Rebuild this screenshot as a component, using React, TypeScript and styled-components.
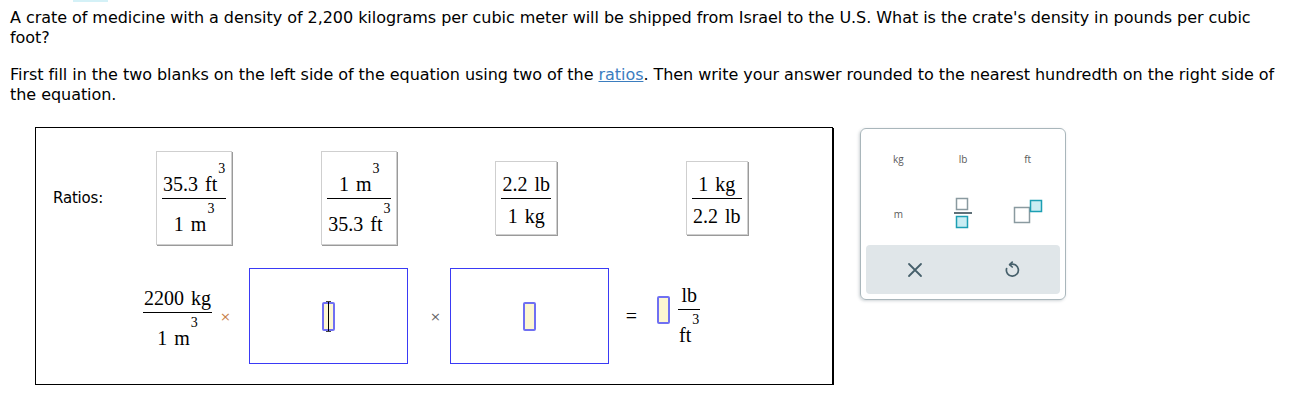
import styled, { createGlobalStyle } from "styled-components";

const Global = createGlobalStyle`
  body {
    margin: 0;
    background: #fff;
    font-family: "DejaVu Sans", Verdana, sans-serif;
    color: #000;
  }
`;

const Page = styled.div`
  padding: 0 11px 0 10px;
`;

const Tab = styled.div`
  width: 35px;
  height: 2px;
  margin-left: 63px;
  background: #d4f1f7;
`;

const Para = styled.p<{ $top: number }>`
  margin: ${(p) => p.$top}px 0 0;
  font-size: 16px;
  line-height: 20px;
  letter-spacing: -0.05px;
`;

const Link = styled.a`
  color: #3b7dbf;
  text-decoration: underline;
`;

const Workspace = styled.div`
  display: flex;
  align-items: flex-start;
  margin: 22px 0 0 25px;
  gap: 27px;
`;

const Board = styled.div`
  width: 798px;
  height: 258px;
  box-sizing: border-box;
  border: 1px solid #000;
  box-shadow: 1px 1px 0 #000;
  padding-top: 24px;
  display: flex;
  flex-direction: column;
`;

const RatioRow = styled.div`
  display: flex;
  align-items: center;
  height: 92px;
  padding-left: 17px;
`;

const Label = styled.span`
  width: 103px;
  font-size: 15px;
  letter-spacing: -0.2px;
`;

const Card = styled.div<{ $ml: number }>`
  margin-left: ${(p) => p.$ml}px;
  padding: 0 5px;
  border: 1px solid #cfcfcf;
  box-shadow: 1px 1px 0 #9a9a9a;
  display: flex;
  align-items: center;
`;

const Frac = styled.span<{ $pad?: number; $lift?: number; $ml?: number }>`
  display: inline-flex;
  flex-direction: column;
  align-items: center;
  padding: ${(p) => p.$pad ?? 0}px 0;
  margin-left: ${(p) => p.$ml ?? 0}px;
  margin-bottom: ${(p) => p.$lift ?? 0}px;
  font-family: "Liberation Serif", "Times New Roman", serif;
  font-size: 20px;
`;

const Part = styled.span<{ $h: number }>`
  display: flex;
  align-items: flex-end;
  justify-content: center;
  height: ${(p) => p.$h}px;
  padding: 0 1px;
  line-height: 20px;
  white-space: nowrap;
`;

const Bar = styled.span`
  align-self: stretch;
  height: 1px;
  background: #000;
  margin: 4px 0 3px;
`;

const Unit = styled.span`
  margin-left: 7px;
`;

const Sup = styled.span`
  font-size: 14px;
  align-self: flex-start;
  margin-left: 1px;
  line-height: 14px;
`;

const EqRow = styled.div`
  display: flex;
  align-items: center;
  height: 96px;
  margin-top: 24px;
  padding-left: 107px;
`;

const Times = styled.span<{ $ml: number; $color: string }>`
  margin-left: ${(p) => p.$ml}px;
  color: ${(p) => p.$color};
  font-size: 13px;
  font-family: "DejaVu Sans", sans-serif;
`;

const Slot = styled.div<{ $ml: number }>`
  margin-left: ${(p) => p.$ml}px;
  width: 159px;
  height: 96px;
  box-sizing: border-box;
  border: 1.5px solid #3a3af5;
  display: flex;
  align-items: center;
  justify-content: center;
`;

const Blank = styled.span<{ $ml?: number; $h?: number; $lift?: number }>`
  position: relative;
  display: inline-block;
  margin-left: ${(p) => p.$ml ?? 0}px;
  margin-bottom: ${(p) => p.$lift ?? 0}px;
  width: 13px;
  height: ${(p) => p.$h ?? 29}px;
  box-sizing: border-box;
  border: 2px solid #7070f2;
  border-radius: 2px;
  background: #fdf7d2;
`;

const Caret = styled.span`
  position: absolute;
  left: 4px;
  top: -3px;
  bottom: -3px;
  width: 1px;
  background: #000;
  &::before,
  &::after {
    content: "";
    position: absolute;
    left: -2px;
    width: 5px;
    height: 1px;
    background: #444;
  }
  &::before {
    top: 0;
  }
  &::after {
    bottom: 0;
  }
`;

const Equals = styled.span`
  margin-left: 17px;
  font-family: "Liberation Serif", serif;
  font-size: 20px;
`;

const Pad = styled.div`
  width: 206px;
  height: 172px;
  margin-top: 1px;
  box-sizing: border-box;
  border: 1px solid #a9b6bb;
  border-radius: 6px;
  box-shadow: -1px 1px 3px rgba(60, 80, 90, 0.25);
  padding: 2px 5px 5px;
  display: flex;
  flex-direction: column;
`;

const Keys = styled.div`
  display: grid;
  grid-template-columns: repeat(3, 1fr);
  grid-auto-rows: 55px;
`;

const Key = styled.div`
  display: flex;
  align-items: center;
  justify-content: center;
  font-family: "Open Sans", "DejaVu Sans", sans-serif;
  font-size: 10px;
  color: #5a5a5a;
`;

const Actions = styled.div`
  margin-top: auto;
  height: 49px;
  border-radius: 4px;
  background: #e0e6e9;
  display: grid;
  grid-template-columns: 1fr 1fr;
`;

const Action = styled.div`
  display: flex;
  align-items: center;
  justify-content: center;
`;

const FracIcon = () => (
  <svg width="20" height="34" viewBox="0 0 20 34">
    <rect x="3.5" y="1.5" width="11" height="11" fill="#fff" stroke="#8a9aa0" strokeWidth="1.5" />
    <rect x="1" y="15" width="18" height="2" fill="#5f7078" />
    <rect x="3.5" y="19.5" width="11" height="11" fill="#c9edf3" stroke="#1c9fb3" strokeWidth="1.5" />
  </svg>
);

const PowerIcon = () => (
  <svg width="30" height="30" viewBox="0 0 30 30">
    <rect x="1.5" y="8.5" width="15" height="15" fill="#fff" stroke="#8a9aa0" strokeWidth="1.5" />
    <rect x="17.5" y="1.5" width="11" height="11" fill="#c9edf3" stroke="#1c9fb3" strokeWidth="1.5" />
  </svg>
);

const CloseIcon = () => (
  <svg width="16" height="16" viewBox="0 0 16 16">
    <path d="M2 2 L14 14 M14 2 L2 14" stroke="#46606b" strokeWidth="1.8" strokeLinecap="round" />
  </svg>
);

const UndoIcon = () => (
  <svg width="18" height="18" viewBox="0 0 18 18">
    <path
      d="M7 3.6 A6 6 0 1 1 3.6 7.5"
      fill="none"
      stroke="#46606b"
      strokeWidth="1.7"
      strokeLinecap="round"
    />
    <path d="M9.2 1.2 L6.6 3.6 L9.2 6" fill="none" stroke="#46606b" strokeWidth="1.7" strokeLinecap="round" strokeLinejoin="round" />
  </svg>
);

const App = () => {
  return (
    <Page>
      <Global />
      <Tab />
      <Para $top={6}>
        A crate of medicine with a density of 2,200 kilograms per cubic meter will be shipped from Israel to the
        U.S. What is the crate's density in pounds per cubic foot?
      </Para>
      <Para $top={17}>
        First fill in the two blanks on the left side of the equation using two of the <Link>ratios</Link>. Then
        write your answer rounded to the nearest hundredth on the right side of the equation.
      </Para>
      <Workspace>
        <Board>
          <RatioRow>
            <Label>Ratios:</Label>
            <Card $ml={0}>
              <Frac $pad={10}>
                <Part $h={32}>
                  35.3<Unit>ft</Unit>
                  <Sup>3</Sup>
                </Part>
                <Bar />
                <Part $h={32}>
                  1<Unit>m</Unit>
                  <Sup>3</Sup>
                </Part>
              </Frac>
            </Card>
            <Card $ml={89}>
              <Frac $pad={10}>
                <Part $h={32}>
                  1<Unit>m</Unit>
                  <Sup>3</Sup>
                </Part>
                <Bar />
                <Part $h={32}>
                  35.3<Unit>ft</Unit>
                  <Sup>3</Sup>
                </Part>
              </Frac>
            </Card>
            <Card $ml={98}>
              <Frac $pad={8}>
                <Part $h={24}>
                  2.2<Unit>lb</Unit>
                </Part>
                <Bar />
                <Part $h={24}>
                  1<Unit>kg</Unit>
                </Part>
              </Frac>
            </Card>
            <Card $ml={129}>
              <Frac $pad={8}>
                <Part $h={24}>
                  1<Unit>kg</Unit>
                </Part>
                <Bar />
                <Part $h={24}>
                  2.2<Unit>lb</Unit>
                </Part>
              </Frac>
            </Card>
          </RatioRow>
          <EqRow>
            <Frac $lift={0}>
              <Part $h={24}>
                2200<Unit>kg</Unit>
              </Part>
              <Bar />
              <Part $h={32}>
                1<Unit>m</Unit>
                <Sup>3</Sup>
              </Part>
            </Frac>
            <Times $ml={8} $color="#c8824a">×</Times>
            <Slot $ml={18}>
              <Blank>
                <Caret />
              </Blank>
            </Slot>
            <Times $ml={22} $color="#666">×</Times>
            <Slot $ml={9}>
              <Blank />
            </Slot>
            <Equals>=</Equals>
            <Blank $ml={20} $h={28} $lift={12} />
            <Frac $ml={8} $lift={6}>
              <Part $h={24}>lb</Part>
              <Bar />
              <Part $h={32}>
                ft<Sup>3</Sup>
              </Part>
            </Frac>
          </EqRow>
        </Board>
        <Pad>
          <Keys>
            <Key>kg</Key>
            <Key>lb</Key>
            <Key>ft</Key>
            <Key>m</Key>
            <Key>
              <FracIcon />
            </Key>
            <Key>
              <PowerIcon />
            </Key>
          </Keys>
          <Actions>
            <Action>
              <CloseIcon />
            </Action>
            <Action>
              <UndoIcon />
            </Action>
          </Actions>
        </Pad>
      </Workspace>
    </Page>
  );
};

export default App;
